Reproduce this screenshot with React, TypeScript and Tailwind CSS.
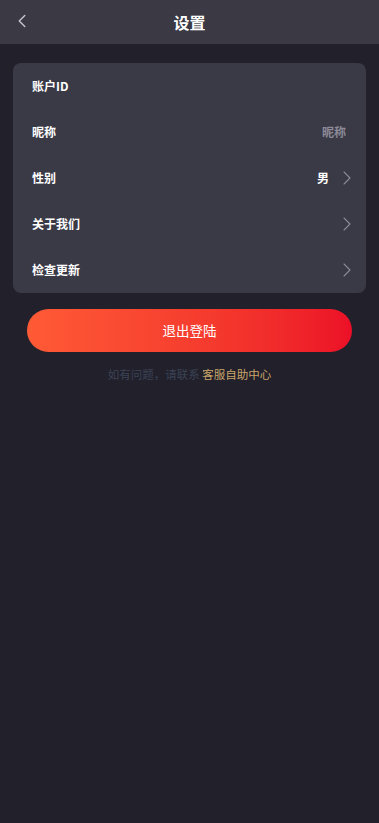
import { ChevronLeft, ChevronRight } from "lucide-react";

const rows: { label: string; value?: string; muted?: boolean; arrow?: boolean }[] = [
  { label: "账户ID" },
  { label: "昵称", value: "昵称", muted: true },
  { label: "性别", value: "男", arrow: true },
  { label: "关于我们", arrow: true },
  { label: "检查更新", arrow: true },
];

function Row({
  label,
  value,
  muted = false,
  arrow = false,
}: Readonly<{ label: string; value?: string; muted?: boolean; arrow?: boolean }>) {
  return (
    <div className="flex h-[46px] items-center justify-between pl-[19px] pr-[7px]">
      <span className="text-[12px] font-bold text-white">{label}</span>
      <div className="flex items-center gap-[6px]">
        {value && (
          <span
            className={
              muted
                ? "mr-[13px] text-[12px] font-bold text-[#8b8a96]"
                : "text-[12px] font-bold text-white"
            }
          >
            {value}
          </span>
        )}
        {arrow && <ChevronRight size={24} strokeWidth={1.1} className="text-[#8b8a96]" />}
      </div>
    </div>
  );
}

export default function App() {
  return (
    <div
      className="min-h-[823px] bg-[#21202b]"
      style={{ fontFamily: '"Noto Sans CJK SC", "Noto Sans", sans-serif' }}
    >
      <header className="relative flex h-[44px] items-center justify-center bg-[#3a3944]">
        <ChevronLeft
          size={22}
          strokeWidth={1.6}
          className="absolute left-[11px] top-[10px] text-[#c4c3cc]"
        />
        <h1 className="text-[16px] font-bold text-white">设置</h1>
      </header>

      <main className="px-[13px] pt-[19px]">
        <section className="overflow-hidden rounded-[8px] bg-[#3a3946]">
          {rows.map((r) => (
            <Row key={r.label} {...r} />
          ))}
        </section>

        <div className="px-[14px] pt-[16px]">
          <button className="flex h-[43px] w-full items-center justify-center rounded-full bg-gradient-to-r from-[#ff5a36] to-[#ec0f27] text-[13.5px] text-white">
            退出登陆
          </button>
        </div>

        <p className="mt-[14px] text-center text-[11.5px] text-[#3b4354]">
          如有问题，请联系 <span className="text-[#c9a56a]">客服自助中心</span>
        </p>
      </main>
    </div>
  );
}
